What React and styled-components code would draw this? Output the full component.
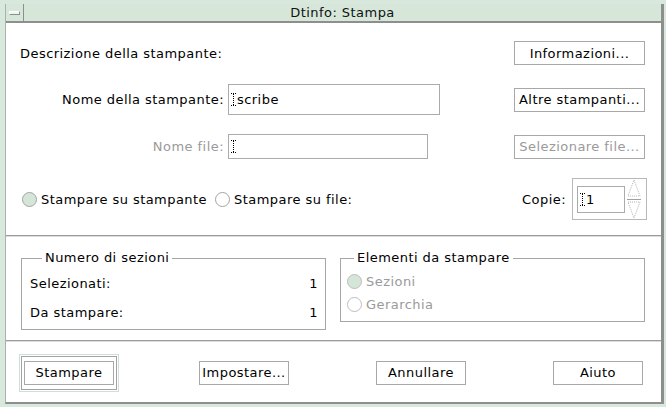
import React from "react";
import styled, { createGlobalStyle } from "styled-components";

const GlobalStyle = createGlobalStyle`
  html, body {
    margin: 0;
    padding: 0;
    background: #d9e8dd;
  }
  body {
    font-family: "DejaVu Sans", "Liberation Sans", sans-serif;
    font-size: 13px;
    letter-spacing: 0.45px;
    color: #000;
  }
`;

const Window = styled.div`
  width: 666px;
  height: 407px;
  box-sizing: border-box;
  padding: 4px 3px 3px 5px;
  background: #d9e8dd;
  display: flex;
`;

const Frame = styled.div`
  flex: 1;
  display: flex;
  flex-direction: column;
  border-left: 1px solid #a9b3ab;
  border-right: 3px solid #8e8e8e;
  border-bottom: 2px solid #8e8e8e;
`;

const TitleBar = styled.div`
  height: 19px;
  display: flex;
  background: #d6e7da;
  border-bottom: 2px solid #8e8e8e;
  box-sizing: border-box;
`;

const MinButton = styled.div`
  width: 17px;
  border-right: 1px solid #8e8e8e;
  display: flex;
  align-items: center;
  justify-content: center;
`;

const MinBar = styled.div`
  width: 9px;
  height: 2px;
  margin-top: 1px;
  background: #eef5f0;
  border: 1px solid #8e8e8e;
  border-top-color: #fff;
  border-left-color: #fff;
`;

const Title = styled.div`
  flex: 1;
  text-align: center;
  line-height: 17px;
  color: #111;
`;

const Body = styled.div`
  flex: 1;
  background: #fff;
  display: flex;
  flex-direction: column;
`;

const TopSection = styled.div`
  display: flex;
  flex-direction: column;
  gap: 19px;
  padding: 18px 16px 15px 0;
`;

const Row = styled.div`
  display: flex;
  align-items: center;
  height: ${(p) => p.$h}px;
`;

const Description = styled.div`
  padding-left: 14px;
  flex: 1;
`;

const FieldLabel = styled.div`
  width: 218px;
  text-align: right;
  color: ${(p) => (p.$disabled ? "#9a9a9a" : "#000")};
`;

const Input = styled.div`
  box-sizing: border-box;
  width: ${(p) => p.$w}px;
  height: ${(p) => p.$h}px;
  margin-left: ${(p) => p.$ml ?? 4}px;
  border: 1px solid #ababab;
  display: flex;
  align-items: center;
  padding-left: 2px;
  background: #fff;
`;

const Spacer = styled.div`
  flex: 1;
`;

const Button = styled.button`
  box-sizing: border-box;
  width: ${(p) => p.$w || 90}px;
  height: 24px;
  padding: 0;
  background: #fff;
  border: 1px solid #a8a8a8;
  font: inherit;
  letter-spacing: inherit;
  color: ${(p) => (p.disabled ? "#9a9a9a" : "#000")};
  text-align: center;
`;

const DefaultRing = styled.div`
  border: 1px solid #cde1d2;
  padding: 1px;
  margin-right: -7px;
`;

const DefaultInner = styled.div`
  border: 1px solid #a2a2a2;
  padding: 4px 2px;
  display: flex;
`;

const RadioRow = styled.label`
  display: flex;
  align-items: center;
  gap: 4px;
  margin-right: ${(p) => p.$mr || 0}px;
  color: ${(p) => (p.$disabled ? "#9a9a9a" : "#000")};
  height: ${(p) => p.$h || 22}px;
`;

const RadioDot = styled.span`
  box-sizing: border-box;
  width: 15px;
  height: 15px;
  border-radius: 50%;
  border: 1px solid ${(p) => (p.$disabled ? "#bdbdbd" : "#a4a4a4")};
  background: ${(p) => (p.$checked ? "#d4e6d8" : "#fff")};
`;

const RadioGroup = styled.div`
  display: flex;
  align-items: center;
  padding-left: 16px;
`;

const CopiesLabel = styled.div`
  margin-right: 6px;
`;

const SpinBox = styled.div`
  box-sizing: border-box;
  width: 75px;
  height: 42px;
  border: 1px solid #b8b8b8;
  display: flex;
  align-items: center;
  padding-left: 4px;
  margin-right: -2px;
`;

const Arrows = styled.div`
  width: 14px;
  margin-left: 2px;
  display: flex;
`;

const Separator = styled.div`
  height: 1px;
  background: #9c9c9c;
  border-bottom: 1px solid #dcdcdc;
`;

const GroupSection = styled.div`
  display: flex;
  align-items: flex-start;
  gap: 14px;
  padding: 13px 16px 10px 15px;
`;

const Group = styled.fieldset`
  margin: 0;
  width: 305px;
  box-sizing: border-box;
  border: 1px solid #a6a6a6;
  padding: ${(p) => p.$pad};
  min-width: 0;
`;

const Legend = styled.legend`
  margin-left: ${(p) => p.$ml || 12}px;
  padding: 0 3px;
  line-height: 16px;
`;

const CountRow = styled.div`
  display: flex;
  justify-content: space-between;
  align-items: center;
  height: 22px;
  margin-top: ${(p) => p.$mt || 0}px;
`;

const ButtonBar = styled.div`
  flex: 1;
  display: flex;
  align-items: center;
  gap: 87px;
  padding: 1px 0 0 13px;
`;

const Cursor = () => (
  <svg width="5" height="13" viewBox="0 0 5 13" style={{ marginRight: 1 }}>
    <g stroke="#000" strokeWidth="1" strokeDasharray="1 1" fill="none">
      <path d="M0 0.5 H5 M2.5 1 V12 M0 12.5 H5" />
    </g>
  </svg>
);

const SpinArrows = () => (
  <svg width="14" height="40" viewBox="0 0 14 40">
    <g stroke="#b4b4b4" strokeWidth="1" fill="none" strokeDasharray="1 1">
      <path d="M7 1 L13 17 H1 Z" />
      <path d="M1 23 H13 L7 39 Z" />
    </g>
    <path d="M0 20.5 H14" stroke="#a0a0a0" strokeWidth="1" />
  </svg>
);

export default function App() {
  return (
    <>
      <GlobalStyle />
      <Window>
        <Frame>
          <TitleBar>
            <MinButton>
              <MinBar />
            </MinButton>
            <Title>Dtinfo: Stampa</Title>
          </TitleBar>
          <Body>
            <TopSection>
              <Row $h={24}>
                <Description>Descrizione della stampante:</Description>
                <Button $w={131}>Informazioni...</Button>
              </Row>
              <Row $h={31}>
                <FieldLabel>Nome della stampante:</FieldLabel>
                <Input $w={212} $h={31}>
                  <Cursor />
                  scribe
                </Input>
                <Spacer />
                <Button $w={131}>Altre stampanti...</Button>
              </Row>
              <Row $h={25}>
                <FieldLabel $disabled>Nome file:</FieldLabel>
                <Input $w={200} $h={25}>
                  <Cursor />
                </Input>
                <Spacer />
                <Button $w={131} disabled>
                  Selezionare file...
                </Button>
              </Row>
              <Row $h={42}>
                <RadioGroup>
                  <RadioRow $mr={8}>
                    <RadioDot $checked />
                    Stampare su stampante
                  </RadioRow>
                  <RadioRow>
                    <RadioDot />
                    Stampare su file:
                  </RadioRow>
                </RadioGroup>
                <Spacer />
                <CopiesLabel>Copie:</CopiesLabel>
                <SpinBox>
                  <Input $w={48} $h={27} $ml={0}>
                    <Cursor />1
                  </Input>
                  <Arrows>
                    <SpinArrows />
                  </Arrows>
                </SpinBox>
              </Row>
            </TopSection>
            <Separator />
            <GroupSection>
              <Group $pad="6px 7px 6px 8px">
                <Legend>Numero di sezioni</Legend>
                <CountRow>
                  <span>Selezionati:</span>
                  <span>1</span>
                </CountRow>
                <CountRow $mt={7}>
                  <span>Da stampare:</span>
                  <span>1</span>
                </CountRow>
              </Group>
              <Group $pad="4px 6px 4px 6px">
                <Legend $ml={7}>Elementi da stampare</Legend>
                <RadioRow $disabled>
                  <RadioDot $checked $disabled />
                  Sezioni
                </RadioRow>
                <RadioRow $disabled $h={25}>
                  <RadioDot $disabled />
                  Gerarchia
                </RadioRow>
              </Group>
            </GroupSection>
            <Separator />
            <ButtonBar>
              <DefaultRing>
                <DefaultInner>
                  <Button>Stampare</Button>
                </DefaultInner>
              </DefaultRing>
              <Button>Impostare...</Button>
              <Button>Annullare</Button>
              <Button>Aiuto</Button>
            </ButtonBar>
          </Body>
        </Frame>
      </Window>
    </>
  );
}
